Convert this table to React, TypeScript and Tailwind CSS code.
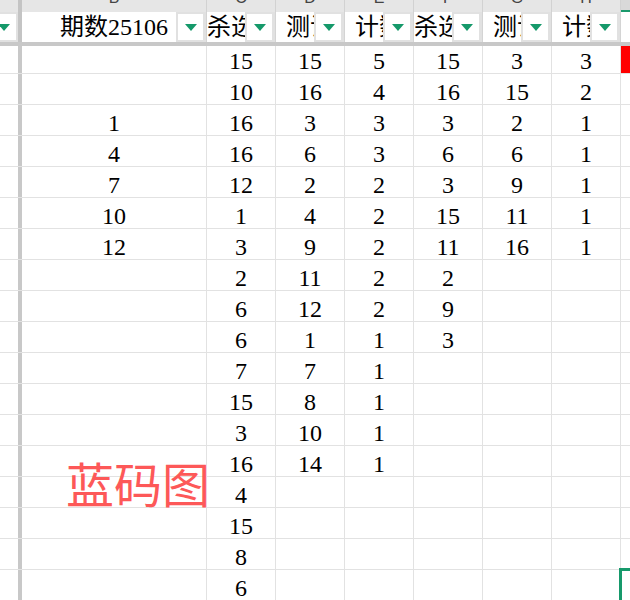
import React from "react";

const serif = "font-['Liberation_Serif','Noto_Sans_CJK_SC',serif]";

const dataB = ["", "", "1", "4", "7", "10", "12"];
const dataC = ["15", "10", "16", "16", "12", "1", "3", "2", "6", "6", "7", "15", "3", "16", "4", "15", "8", "6"];
const dataD = ["15", "16", "3", "6", "2", "4", "9", "11", "12", "1", "7", "8", "10", "14"];
const dataE = ["5", "4", "3", "3", "2", "2", "2", "2", "2", "1", "1", "1", "1", "1"];
const dataF = ["15", "16", "3", "6", "3", "15", "11", "2", "9", "3"];
const dataG = ["3", "15", "2", "6", "9", "11", "16"];
const dataH = ["3", "2", "1", "1", "1", "1", "1"];

const narrow = [
  { letter: "C", title: "杀选号码", pad: "pl-0", data: dataC },
  { letter: "D", title: "测试号码", pad: "pl-[10px]", data: dataD },
  { letter: "E", title: "计数统计", pad: "pl-[10px]", data: dataE },
  { letter: "F", title: "杀选号码", pad: "pl-0", data: dataF },
  { letter: "G", title: "测试号码", pad: "pl-[10px]", data: dataG },
  { letter: "H", title: "计数统计", pad: "pl-[10px]", data: dataH },
];

const FilterButton = () => (
  <div className="w-[25px] h-[26px] shrink-0 bg-white flex items-center justify-center">
    <div className="w-0 h-0 border-l-[6px] border-r-[6px] border-t-[7px] border-l-transparent border-r-transparent border-t-[#15996a]" />
  </div>
);

const HeaderLetter = ({ letter, width }: { letter: string; width: string }) => (
  <div className={`${width} h-full shrink-0 border-r border-[#d2d2d2] overflow-hidden flex justify-center`}>
    <div className="-mt-[10px] leading-[16px] text-[16px] text-[#444] font-['Liberation_Sans',sans-serif]">
      {letter}
    </div>
  </div>
);

export default function App() {
  const rows = Array.from({ length: 18 }, (_, i) => i);

  return (
    <div className="relative w-[630px] h-[600px] overflow-hidden bg-white">
      {/* column letters */}
      <div className="flex h-[12px] bg-[#e6e6e6]">
        <div className="w-[18px] shrink-0" />
        <div className="w-[4px] shrink-0 bg-[#c4c4c4]" />
        <HeaderLetter letter="B" width="w-[185px]" />
        {narrow.map((c) => (
          <HeaderLetter key={c.letter} letter={c.letter} width="w-[69px]" />
        ))}
        <div className="flex-1 bg-[#d9d9d9] border-b-2 border-[#1b9a6c]" />
      </div>

      {/* filter row */}
      <div className={`flex h-[30px] bg-[#e1e1e1] text-[24px] text-black ${serif}`}>
        <div className="w-[18px] shrink-0 overflow-hidden flex justify-end items-center pr-[2px]">
          <FilterButton />
        </div>
        <div className="w-[4px] shrink-0 bg-[#c4c4c4]" />
        <div className="w-[185px] shrink-0 flex items-center border-r border-[#d4d4d4]">
          <div className="flex-1 h-full bg-white overflow-hidden whitespace-nowrap flex items-center justify-center pl-[30px]">
            期数25106
          </div>
          <div className="w-[2px]" />
          <FilterButton />
          <div className="w-[3px]" />
        </div>
        {narrow.map((c) => (
          <div key={c.letter} className="w-[69px] shrink-0 flex items-center border-r border-[#d4d4d4]">
            <div className={`w-[38px] h-full bg-white overflow-hidden whitespace-nowrap flex items-center ${c.pad}`}>
              {c.title}
            </div>
            <div className="w-[2px]" />
            <FilterButton />
          </div>
        ))}
        <div className="flex-1 bg-white" />
      </div>

      {/* frozen pane line */}
      <div className="h-[4px] bg-[#c8c8c8]" />

      {/* data rows */}
      <div className={`text-[24px] text-black ${serif}`}>
        {rows.map((i) => (
          <div
            key={i}
            className={`flex border-b border-[#e2e2e2] ${i === 0 ? "h-[28px]" : "h-[31px]"}`}
          >
            <div className="w-[18px] shrink-0" />
            <div className="w-[4px] shrink-0 bg-[#c8c8c8]" />
            <div className="w-[185px] shrink-0 border-r border-[#e2e2e2] flex items-end justify-center leading-none">
              {dataB[i] ?? ""}
            </div>
            {narrow.map((c) => (
              <div
                key={c.letter}
                className="w-[69px] shrink-0 border-r border-[#e2e2e2] flex items-end justify-center leading-none"
              >
                {c.data[i] ?? ""}
              </div>
            ))}
            <div className={`flex-1 ${i === 0 ? "bg-[#ff0000]" : ""}`} />
          </div>
        ))}
      </div>

      {/* floating text box */}
      <div className="absolute left-[66px] top-[458px] text-[48px] leading-none text-[#fd5858] font-['Noto_Sans_CJK_SC',sans-serif] whitespace-nowrap">
        蓝码图
      </div>

      {/* active cell selection */}
      <div className="absolute left-[619px] top-[568px] w-[30px] h-[40px] border-[3px] border-[#16996b]" />
    </div>
  );
}
